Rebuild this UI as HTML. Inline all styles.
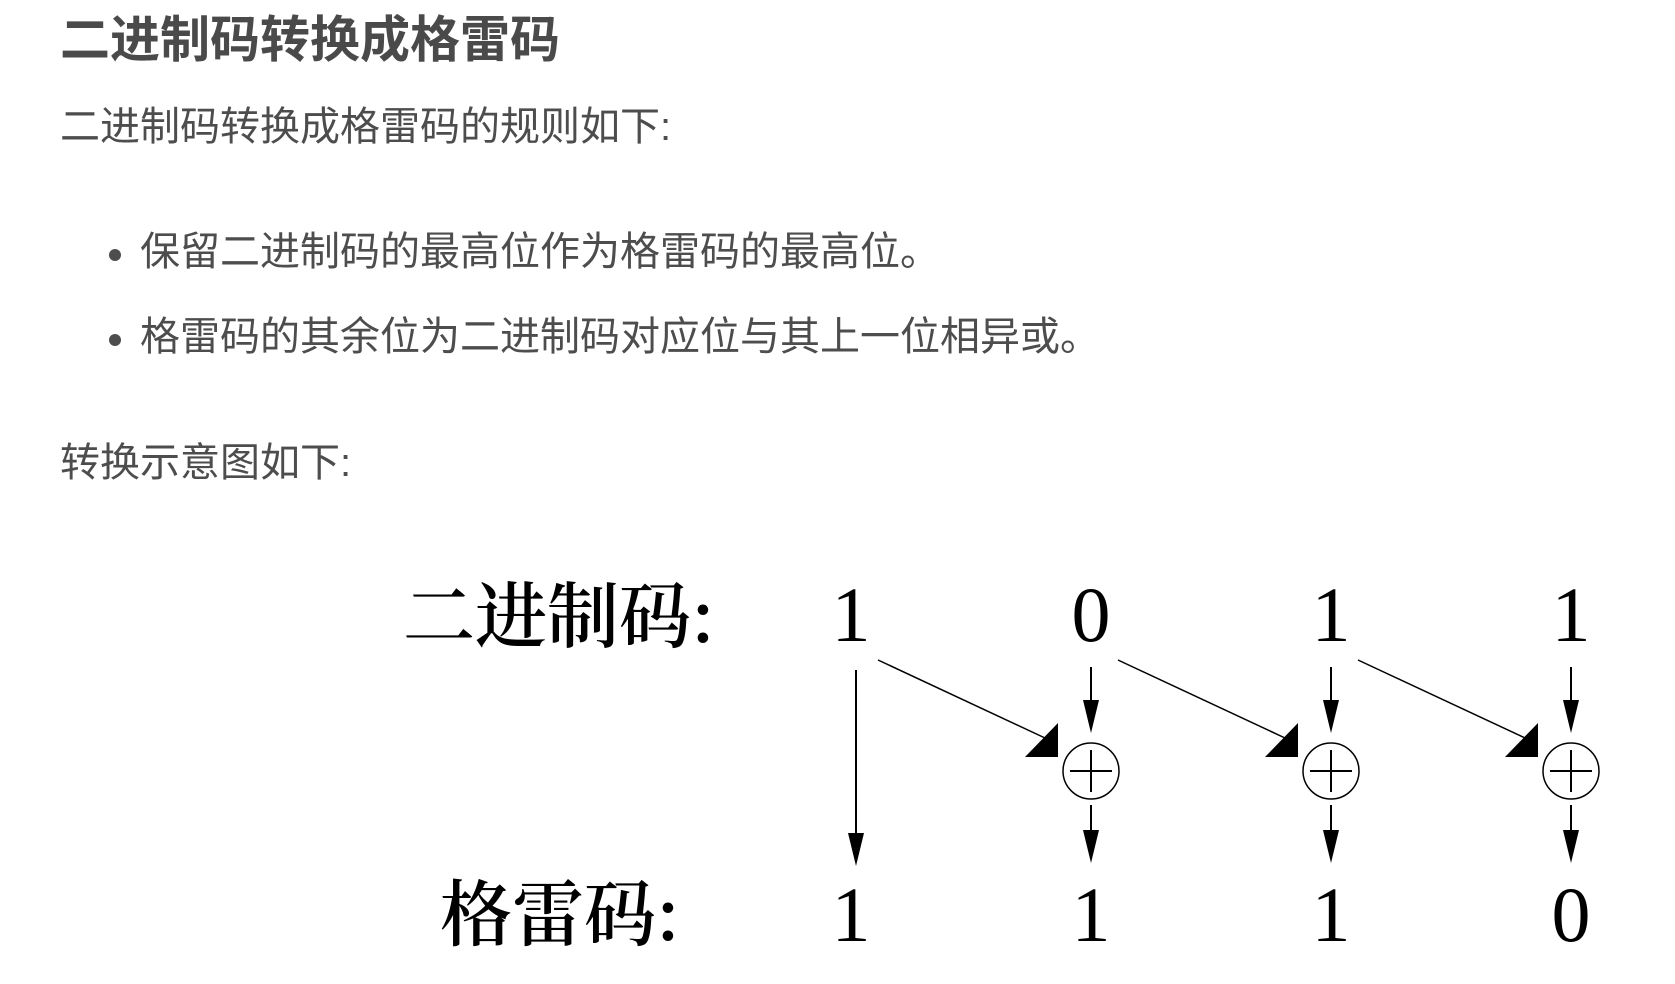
<!DOCTYPE html>
<html><head><meta charset="utf-8"><style>
html,body{margin:0;padding:0;background:#fff;width:1675px;height:984px;overflow:hidden;position:relative}
.t{position:absolute;white-space:nowrap;font-family:"Liberation Sans","Noto Sans CJK SC",sans-serif;color:#4d4d4d;line-height:1}
</style></head><body>
<div class="t" style="left:60px;top:15px;font-size:50px;font-weight:bold;color:#4a4a4a">二进制码转换成格雷码</div>
<div class="t" style="left:60px;top:107px;font-size:40px">二进制码转换成格雷码的规则如下:</div>
<div class="t" style="left:140px;top:232px;font-size:40px">保留二进制码的最高位作为格雷码的最高位。</div>
<div class="t" style="left:140px;top:317px;font-size:40px">格雷码的其余位为二进制码对应位与其上一位相异或。</div>
<div style="position:absolute;left:109px;top:249px;width:12px;height:12px;border-radius:50%;background:#4d4d4d"></div>
<div style="position:absolute;left:109px;top:334px;width:12px;height:12px;border-radius:50%;background:#4d4d4d"></div>
<div class="t" style="left:60px;top:443px;font-size:40px">转换示意图如下:</div>
<svg width="1675" height="984" style="position:absolute;left:0;top:0" xmlns="http://www.w3.org/2000/svg">
<g font-family="'Noto Serif CJK SC','Liberation Serif',serif" font-size="72" font-weight="600" fill="#000">
<text x="403" y="642">二进制码:</text>
<text x="440" y="940">格雷码:</text>
</g>
<g font-family="'Liberation Serif',serif" font-size="78" fill="#000" text-anchor="middle">
<text x="851" y="641">1</text><text x="1091" y="641">0</text><text x="1331" y="641">1</text><text x="1571" y="641">1</text>
<text x="851" y="941">1</text><text x="1091" y="941">1</text><text x="1331" y="941">1</text><text x="1571" y="941">0</text>
</g>
<line x1="856" y1="670" x2="856" y2="840" stroke="#000" stroke-width="2"/>
<polygon points="848,833 864,833 856,866" fill="#000"/>
<g id="c">
<line x1="1091" y1="667" x2="1091" y2="705" stroke="#000" stroke-width="2"/>
<polygon points="1083,700 1099,700 1091,733" fill="#000"/>
<ellipse cx="1091" cy="771" rx="28" ry="28" fill="none" stroke="#000" stroke-width="1.5"/>
<line x1="1091" y1="750" x2="1091" y2="792" stroke="#000" stroke-width="2"/>
<line x1="1070" y1="771" x2="1112" y2="771" stroke="#000" stroke-width="2"/>
<line x1="1091" y1="805" x2="1091" y2="835" stroke="#000" stroke-width="2"/>
<polygon points="1083,830 1099,830 1091,863" fill="#000"/>
<line x1="878" y1="660" x2="1045" y2="738" stroke="#000" stroke-width="1.5"/>
<polygon points="1058,723 1025,757 1058,757" fill="#000"/>
</g>
<use href="#c" x="240" y="0"/>
<use href="#c" x="480" y="0"/>
</svg>
</body></html>
